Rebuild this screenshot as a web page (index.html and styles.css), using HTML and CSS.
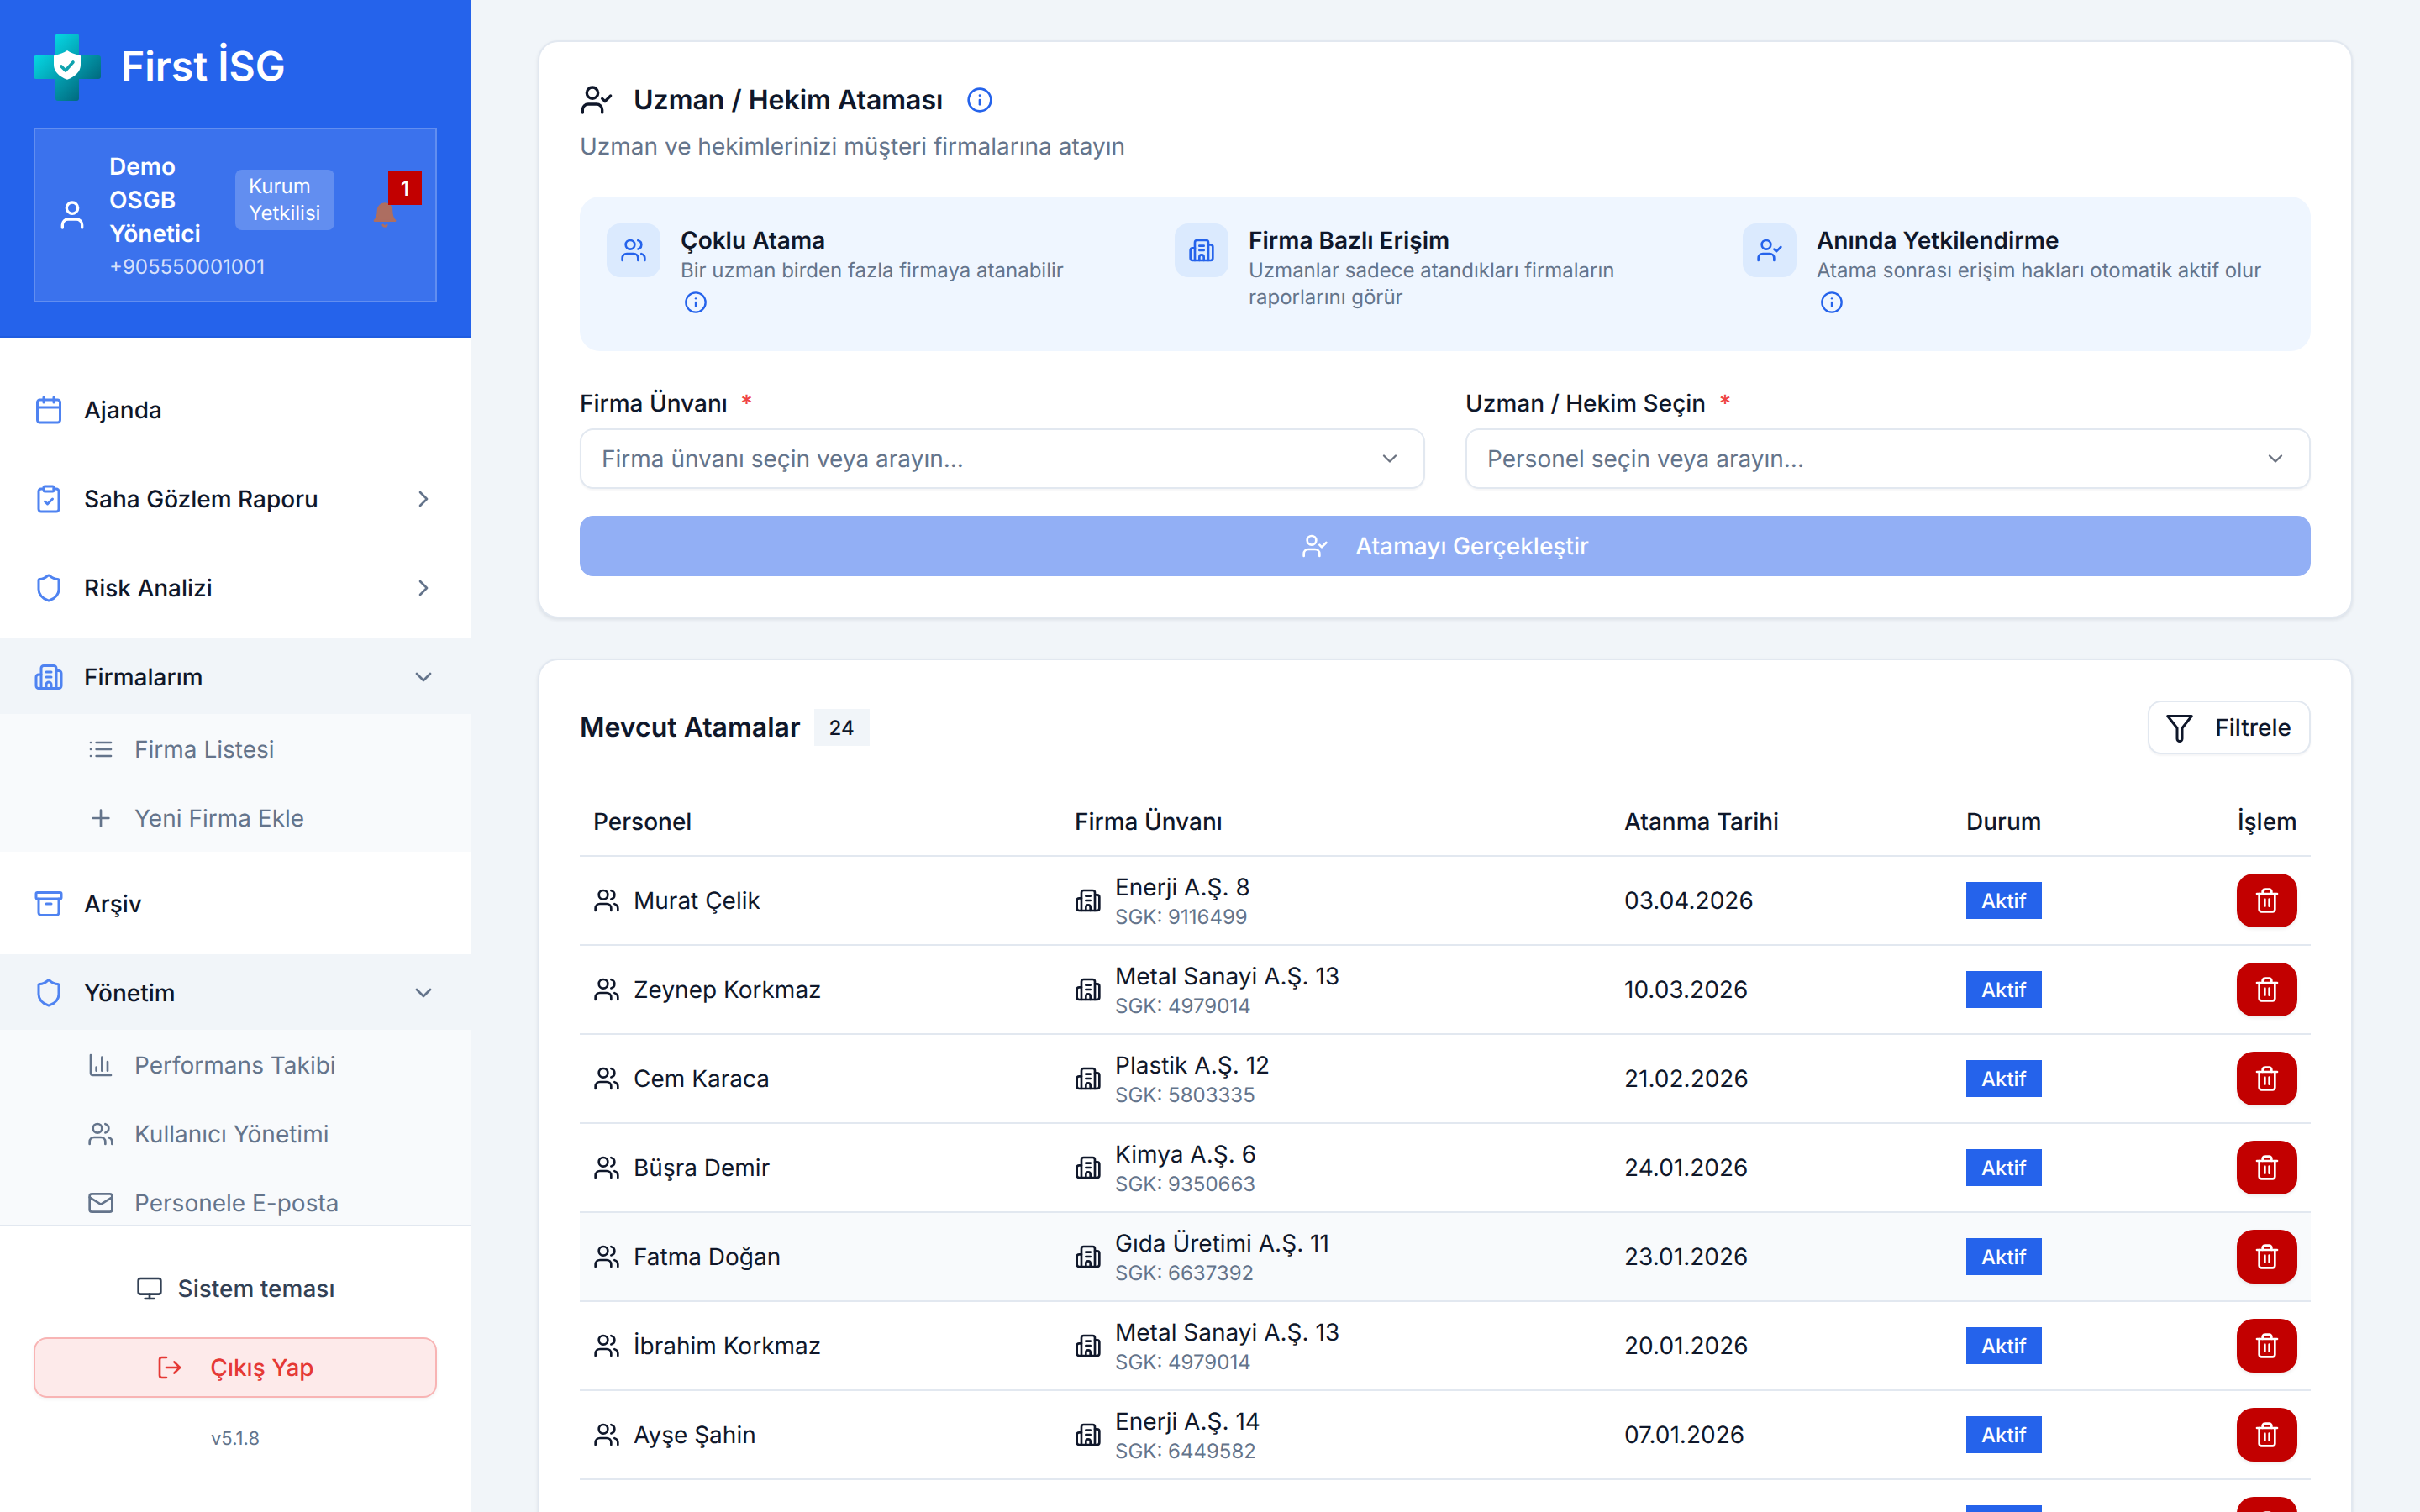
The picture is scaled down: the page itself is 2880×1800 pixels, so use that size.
FILE: index.html
```html
<!DOCTYPE html>
<html lang="tr">
<head>
<meta charset="utf-8">
<title>First İSG</title>
<link rel="stylesheet" href="styles.css">
</head>
<body>
<svg class="defs" aria-hidden="true">
  <symbol id="user" viewBox="0 0 24 24"><path d="M19 21v-2a4 4 0 0 0-4-4H9a4 4 0 0 0-4 4v2"/><circle cx="12" cy="7" r="4"/></symbol>
  <symbol id="users" viewBox="0 0 24 24"><path d="M16 21v-2a4 4 0 0 0-4-4H6a4 4 0 0 0-4 4v2"/><circle cx="9" cy="7" r="4"/><path d="M22 21v-2a4 4 0 0 0-3-3.87"/><path d="M16 3.13a4 4 0 0 1 0 7.75"/></symbol>
  <symbol id="usercheck" viewBox="0 0 24 24"><path d="M16 21v-2a4 4 0 0 0-4-4H6a4 4 0 0 0-4 4v2"/><circle cx="9" cy="7" r="4"/><polyline points="16 11 18 13 22 9"/></symbol>
  <symbol id="calendar" viewBox="0 0 24 24"><path d="M8 2v4"/><path d="M16 2v4"/><rect x="3" y="4" width="18" height="18" rx="2"/><path d="M3 10h18"/></symbol>
  <symbol id="clipboard" viewBox="0 0 24 24"><rect x="8" y="2" width="8" height="4" rx="1"/><path d="M16 4h2a2 2 0 0 1 2 2v14a2 2 0 0 1-2 2H6a2 2 0 0 1-2-2V6a2 2 0 0 1 2-2h2"/><path d="m9 14 2 2 4-4"/></symbol>
  <symbol id="shield" viewBox="0 0 24 24"><path d="M20 13c0 5-3.5 7.5-7.66 8.95a1 1 0 0 1-.67-.01C7.5 20.5 4 18 4 13V6a1 1 0 0 1 1-1c2 0 4.5-1.2 6.24-2.72a1.17 1.17 0 0 1 1.52 0C14.51 3.81 17 5 19 5a1 1 0 0 1 1 1z"/></symbol>
  <symbol id="building" viewBox="0 0 24 24"><path d="M10 12h4"/><path d="M10 8h4"/><path d="M14 21v-3a2 2 0 0 0-4 0v3"/><path d="M6 10H4a2 2 0 0 0-2 2v7a2 2 0 0 0 2 2h16a2 2 0 0 0 2-2V9a2 2 0 0 0-2-2h-2"/><path d="M6 21V5a2 2 0 0 1 2-2h8a2 2 0 0 1 2 2v16"/></symbol>
  <symbol id="right" viewBox="0 0 24 24"><path d="m9 18 6-6-6-6"/></symbol>
  <symbol id="down" viewBox="0 0 24 24"><path d="m6 9 6 6 6-6"/></symbol>
  <symbol id="list" viewBox="0 0 24 24"><path d="M3 12h.01"/><path d="M3 18h.01"/><path d="M3 6h.01"/><path d="M8 12h13"/><path d="M8 18h13"/><path d="M8 6h13"/></symbol>
  <symbol id="plus" viewBox="0 0 24 24"><path d="M5 12h14"/><path d="M12 5v14"/></symbol>
  <symbol id="archive" viewBox="0 0 24 24"><rect x="2" y="3" width="20" height="5" rx="1"/><path d="M4 8v11a2 2 0 0 0 2 2h12a2 2 0 0 0 2-2V8"/><path d="M10 12h4"/></symbol>
  <symbol id="chart" viewBox="0 0 24 24"><path d="M3 3v16a2 2 0 0 0 2 2h16"/><path d="M18 17V9"/><path d="M13 17V5"/><path d="M8 17v-3"/></symbol>
  <symbol id="mail" viewBox="0 0 24 24"><rect x="2" y="4" width="20" height="16" rx="2"/><path d="m22 7-8.97 5.7a1.94 1.94 0 0 1-2.06 0L2 7"/></symbol>
  <symbol id="monitor" viewBox="0 0 24 24"><rect x="2" y="3" width="20" height="14" rx="2"/><path d="M8 21h8"/><path d="M12 17v4"/></symbol>
  <symbol id="logout" viewBox="0 0 24 24"><path d="M9 21H5a2 2 0 0 1-2-2V5a2 2 0 0 1 2-2h4"/><polyline points="16 17 21 12 16 7"/><path d="M21 12H9"/></symbol>
  <symbol id="info" viewBox="0 0 24 24"><circle cx="12" cy="12" r="10"/><path d="M12 16v-4"/><path d="M12 8h.01"/></symbol>
  <symbol id="trash" viewBox="0 0 24 24"><path d="M3 6h18"/><path d="M19 6v14c0 1-1 2-2 2H7c-1 0-2-1-2-2V6"/><path d="M8 6V4c0-1 1-2 2-2h4c1 0 2 1 2 2v2"/><path d="M10 11v6"/><path d="M14 11v6"/></symbol>
  <symbol id="funnel" viewBox="0 0 24 24"><path d="M2.5 3h19L14 12.5V21a2 2 0 0 1-4 0v-8.500z"/></symbol>
  <symbol id="bell" viewBox="0 0 24 24"><path d="M6 8a6 6 0 0 1 12 0c0 7 3 9 3 9H3s3-2 3-9"/><path class="clapper" d="M10.300 21a1.940 1.940 0 0 0 3.400 0"/></symbol>
</svg>

<div class="app">
  <aside class="sidebar">
    <header class="side-head">
      <div class="brand">
        <svg class="logo" viewBox="0 0 80 80">
          <defs><linearGradient id="lg" gradientUnits="userSpaceOnUse" x1="8" y1="8" x2="72" y2="72"><stop offset="0" stop-color="#06e2ee"/><stop offset="1" stop-color="#005f75"/></linearGradient></defs>
          <path fill="url(#lg)" d="M29 0h22a3 3 0 0 1 3 3v23h23a3 3 0 0 1 3 3v22a3 3 0 0 1-3 3H54v23a3 3 0 0 1-3 3H29a3 3 0 0 1-3-3V54H3a3 3 0 0 1-3-3V29a3 3 0 0 1 3-3h23V3a3 3 0 0 1 3-3z"/>
          <path fill="#fff" d="M40 24.500c4 3 9 4.800 14.500 5.500 1 0 1.500.6 1.500 1.500v10c0 8.500-7 14.500-16 17.800-9-3.300-16-9.300-16-17.800v-10c0-.9.5-1.500 1.500-1.500 5.500-.7 10.500-2.500 14.500-5.500z" transform="translate(0 -4.500)"/>
          <path fill="none" stroke="#0fa3ae" stroke-width="3.600" stroke-linecap="round" stroke-linejoin="round" d="M33 39l5 5 9-10"/>
        </svg>
        <span class="brand-name">First İSG</span>
      </div>
      <div class="user-box">
        <svg class="i s40"><use href="#user"/></svg>
        <div class="user-text">
          <div class="user-top">
            <div class="user-name">Demo OSGB Yönetici</div>
            <div class="user-role">Kurum Yetkilisi</div>
          </div>
          <div class="user-phone">+905550001001</div>
        </div>
        <div class="bell-wrap">
          <svg class="i s32 bell"><use href="#bell"/></svg>
          <span class="bell-count">1</span>
        </div>
      </div>
    </header>

    <nav class="nav">
      <a class="nav-row"><svg class="i s36 nav-ic"><use href="#calendar"/></svg><span>Ajanda</span></a>
      <a class="nav-row"><svg class="i s36 nav-ic"><use href="#clipboard"/></svg><span>Saha Gözlem Raporu</span><svg class="i s32 chev"><use href="#right"/></svg></a>
      <a class="nav-row"><svg class="i s36 nav-ic"><use href="#shield"/></svg><span>Risk Analizi</span><svg class="i s32 chev"><use href="#right"/></svg></a>
      <div class="nav-group">
        <a class="nav-row open"><svg class="i s36 nav-ic"><use href="#building"/></svg><span>Firmalarım</span><svg class="i s32 chev"><use href="#down"/></svg></a>
        <div class="sub">
          <a class="sub-row"><svg class="i s32"><use href="#list"/></svg><span>Firma Listesi</span></a>
          <a class="sub-row"><svg class="i s32"><use href="#plus"/></svg><span>Yeni Firma Ekle</span></a>
        </div>
      </div>
      <a class="nav-row"><svg class="i s36 nav-ic"><use href="#archive"/></svg><span>Arşiv</span></a>
      <div class="nav-group">
        <a class="nav-row open"><svg class="i s36 nav-ic"><use href="#shield"/></svg><span>Yönetim</span><svg class="i s32 chev"><use href="#down"/></svg></a>
        <div class="sub">
          <a class="sub-row"><svg class="i s32"><use href="#chart"/></svg><span>Performans Takibi</span></a>
          <a class="sub-row"><svg class="i s32"><use href="#users"/></svg><span>Kullanıcı Yönetimi</span></a>
          <a class="sub-row"><svg class="i s32"><use href="#mail"/></svg><span>Personele E-posta</span></a>
        </div>
      </div>
    </nav>

    <footer class="side-foot">
      <div class="theme"><svg class="i s32"><use href="#monitor"/></svg><span>Sistem teması</span></div>
      <button class="logout"><svg class="i s32"><use href="#logout"/></svg><span>Çıkış Yap</span></button>
      <div class="version">v5.1.8</div>
    </footer>
  </aside>

  <main class="main">
    <section class="card">
      <div class="card-title">
        <svg class="i s40"><use href="#usercheck"/></svg>
        <h1>Uzman / Hekim Ataması</h1>
        <svg class="i s32 blue"><use href="#info"/></svg>
      </div>
      <p class="card-sub">Uzman ve hekimlerinizi müşteri firmalarına atayın</p>

      <div class="info-box">
        <div class="info-item">
          <div class="info-ic"><svg class="i s32"><use href="#users"/></svg></div>
          <div>
            <div class="info-title">Çoklu Atama</div>
            <div class="info-desc">Bir uzman birden fazla firmaya atanabilir</div>
            <div class="info-more"><svg class="i s28 blue"><use href="#info"/></svg></div>
          </div>
        </div>
        <div class="info-item">
          <div class="info-ic"><svg class="i s32"><use href="#building"/></svg></div>
          <div>
            <div class="info-title">Firma Bazlı Erişim</div>
            <div class="info-desc">Uzmanlar sadece atandıkları firmaların raporlarını görür</div>
          </div>
        </div>
        <div class="info-item">
          <div class="info-ic"><svg class="i s32"><use href="#usercheck"/></svg></div>
          <div>
            <div class="info-title">Anında Yetkilendirme</div>
            <div class="info-desc">Atama sonrası erişim hakları otomatik aktif olur</div>
            <div class="info-more"><svg class="i s28 blue"><use href="#info"/></svg></div>
          </div>
        </div>
      </div>

      <div class="form-grid">
        <div class="field">
          <label class="label">Firma Ünvanı <span class="req">*</span></label>
          <div class="select"><span>Firma ünvanı seçin veya arayın...</span><svg class="i s28 sel-chev"><use href="#down"/></svg></div>
        </div>
        <div class="field">
          <label class="label">Uzman / Hekim Seçin <span class="req">*</span></label>
          <div class="select"><span>Personel seçin veya arayın...</span><svg class="i s28 sel-chev"><use href="#down"/></svg></div>
        </div>
      </div>
      <button class="submit"><svg class="i s32"><use href="#usercheck"/></svg><span>Atamayı Gerçekleştir</span></button>
    </section>

    <section class="card">
      <div class="list-head">
        <h2>Mevcut Atamalar</h2>
        <span class="count">24</span>
        <button class="filter"><svg class="i s36"><use href="#funnel"/></svg><span>Filtrele</span></button>
      </div>
      <table class="tbl">
        <colgroup><col class="c1"><col class="c2"><col class="c3"><col class="c4"><col class="c5"></colgroup>
        <thead><tr><th>Personel</th><th>Firma Ünvanı</th><th>Atanma Tarihi</th><th>Durum</th><th class="end">İşlem</th></tr></thead>
        <tbody>
          <tr><td><div class="cell"><svg class="i s32"><use href="#users"/></svg>Murat Çelik</div></td><td><div class="cell"><svg class="i s32"><use href="#building"/></svg><div class="firm-text"><div class="firm">Enerji A.Ş. 8</div><div class="sgk">SGK: 9116499</div></div></div></td><td>03.04.2026</td><td><span class="tag">Aktif</span></td><td class="end"><button class="del"><svg class="i s32"><use href="#trash"/></svg></button></td></tr>
          <tr><td><div class="cell"><svg class="i s32"><use href="#users"/></svg>Zeynep Korkmaz</div></td><td><div class="cell"><svg class="i s32"><use href="#building"/></svg><div class="firm-text"><div class="firm">Metal Sanayi A.Ş. 13</div><div class="sgk">SGK: 4979014</div></div></div></td><td>10.03.2026</td><td><span class="tag">Aktif</span></td><td class="end"><button class="del"><svg class="i s32"><use href="#trash"/></svg></button></td></tr>
          <tr><td><div class="cell"><svg class="i s32"><use href="#users"/></svg>Cem Karaca</div></td><td><div class="cell"><svg class="i s32"><use href="#building"/></svg><div class="firm-text"><div class="firm">Plastik A.Ş. 12</div><div class="sgk">SGK: 5803335</div></div></div></td><td>21.02.2026</td><td><span class="tag">Aktif</span></td><td class="end"><button class="del"><svg class="i s32"><use href="#trash"/></svg></button></td></tr>
          <tr><td><div class="cell"><svg class="i s32"><use href="#users"/></svg>Büşra Demir</div></td><td><div class="cell"><svg class="i s32"><use href="#building"/></svg><div class="firm-text"><div class="firm">Kimya A.Ş. 6</div><div class="sgk">SGK: 9350663</div></div></div></td><td>24.01.2026</td><td><span class="tag">Aktif</span></td><td class="end"><button class="del"><svg class="i s32"><use href="#trash"/></svg></button></td></tr>
          <tr class="hover"><td><div class="cell"><svg class="i s32"><use href="#users"/></svg>Fatma Doğan</div></td><td><div class="cell"><svg class="i s32"><use href="#building"/></svg><div class="firm-text"><div class="firm">Gıda Üretimi A.Ş. 11</div><div class="sgk">SGK: 6637392</div></div></div></td><td>23.01.2026</td><td><span class="tag">Aktif</span></td><td class="end"><button class="del"><svg class="i s32"><use href="#trash"/></svg></button></td></tr>
          <tr><td><div class="cell"><svg class="i s32"><use href="#users"/></svg>İbrahim Korkmaz</div></td><td><div class="cell"><svg class="i s32"><use href="#building"/></svg><div class="firm-text"><div class="firm">Metal Sanayi A.Ş. 13</div><div class="sgk">SGK: 4979014</div></div></div></td><td>20.01.2026</td><td><span class="tag">Aktif</span></td><td class="end"><button class="del"><svg class="i s32"><use href="#trash"/></svg></button></td></tr>
          <tr><td><div class="cell"><svg class="i s32"><use href="#users"/></svg>Ayşe Şahin</div></td><td><div class="cell"><svg class="i s32"><use href="#building"/></svg><div class="firm-text"><div class="firm">Enerji A.Ş. 14</div><div class="sgk">SGK: 6449582</div></div></div></td><td>07.01.2026</td><td><span class="tag">Aktif</span></td><td class="end"><button class="del"><svg class="i s32"><use href="#trash"/></svg></button></td></tr>
          <tr><td></td><td><div class="cell"><svg class="i s32"><use href="#building"/></svg><div class="firm-text"><div class="firm">Enerji A.Ş. 10</div></div></div></td><td></td><td><span class="tag">Aktif</span></td><td class="end"><button class="del"><svg class="i s32"><use href="#trash"/></svg></button></td></tr>
        </tbody>
      </table>
    </section>
  </main>
</div>
</body>
</html>
```

FILE: styles.css
```css
* { box-sizing: border-box; }
html, body { margin: 0; height: 100%; overflow: hidden; }
body { font-family: Inter, "Noto Sans", sans-serif; font-size: 28px; color: #0f172a; background: #f1f5f9; text-rendering: geometricPrecision; }
.defs { display: none; }
button { font-family: inherit; cursor: pointer; text-rendering: geometricPrecision; }

.i { fill: none; stroke: currentColor; stroke-width: 2; stroke-linecap: round; stroke-linejoin: round; flex-shrink: 0; display: block; }
.s28 { width: 28px; height: 28px; }
.s32 { width: 32px; height: 32px; }
.s36 { width: 36px; height: 36px; }
.s40 { width: 40px; height: 40px; }
.blue { color: #2563eb; }

.app { display: flex; height: 1800px; overflow: hidden; }

/* Sidebar */
.sidebar { width: 560px; flex-shrink: 0; background: #fff; display: flex; flex-direction: column; height: 100%; }
.side-head { height: 402px; flex-shrink: 0; background: #2563eb; border-bottom: 2px solid #1f5ce0; padding: 40px 40px 0; color: #fff; }
.brand { display: flex; align-items: center; gap: 24px; height: 80px; }
.logo { width: 80px; height: 80px; display: block; }
.brand-name { font-size: 48px; font-weight: 600; line-height: 60px; padding-bottom: 2px; }
.user-box { margin-top: 32px; height: 208px; border: 2px solid rgba(255,255,255,.2); background: rgba(255,255,255,.1); padding: 24px; display: flex; align-items: center; gap: 24px; }
.user-text { width: 268px; flex-shrink: 0; }
.user-top { display: flex; align-items: center; gap: 16px; }
.user-name { width: 134px; flex-shrink: 0; font-weight: 600; line-height: 40px; }
.user-role { width: 118px; flex-shrink: 0; padding: 4px 16px; border-radius: 8px; background: rgba(255,255,255,.2); font-size: 24px; line-height: 32px; }
.user-phone { font-size: 24px; line-height: 36px; padding-top: 2px; margin-bottom: -2px; color: rgba(255,255,255,.8); white-space: nowrap; }
.bell-wrap { position: relative; margin-left: 20px; }
.bell { color: #ad6e61; fill: #ad6e61; }
.bell-count { position: absolute; top: -36px; right: -28px; width: 40px; height: 40px; background: #c20000; color: #fff; font-size: 24px; font-weight: 500; display: flex; align-items: center; justify-content: center; }

.nav { flex: 1; min-height: 0; overflow: hidden; padding-top: 40px; }
.nav-row { height: 90px; padding: 2px 40px 0; margin-bottom: 16px; display: flex; align-items: center; gap: 24px; font-weight: 500; color: #0f172a; }
.nav-ic { color: #4f83f1; }
.nav-row .chev { margin-left: auto; color: #64748b; }
.nav-group { margin-bottom: 16px; }
.nav-group .nav-row { margin-bottom: 0; }
.nav-row.open { background: #f1f5f9; }
.sub { background: #f8fafc; }
.sub-row { height: 82px; padding: 2px 0 0 104px; display: flex; align-items: center; gap: 24px; color: #64748b; }

.side-foot { height: 342px; flex-shrink: 0; border-top: 2px solid #e2e8f0; padding: 42px 40px 0; }
.theme { height: 64px; display: flex; align-items: center; justify-content: center; gap: 18px; font-weight: 500; color: #334155; }
.logout { margin-top: 26px; width: 100%; height: 72px; border: 2px solid #f8b4b4; border-radius: 16px; background: #fdeaea; color: #e53935; font-size: 28px; font-weight: 500; display: flex; align-items: center; justify-content: center; gap: 32px; box-shadow: 0 2px 4px rgba(0,0,0,.05); }
.version { margin-top: 33px; text-align: center; font-size: 22px; line-height: 32px; color: #64748b; }

/* Main */
.main { flex: 1; min-width: 0; padding: 48px 80px; height: 100%; overflow: hidden; display: flex; flex-direction: column; gap: 48px; }
.card { background: #fff; border: 2px solid #e2e8f0; border-radius: 24px; padding: 48px; box-shadow: 0 2px 4px rgba(15,23,42,.09); flex-shrink: 0; }
.card-title { display: flex; align-items: center; gap: 24px; height: 42px; }
.card-title h1 { margin: 0 4px 0 0; font-size: 32px; font-weight: 600; line-height: 42px; }
.card-sub { margin: 14px 0 40px; line-height: 40px; color: #64748b; }

.info-box { background: #eff6ff; border-radius: 24px; padding: 32px; display: grid; grid-template-columns: repeat(3, 1fr); gap: 32px; }
.info-item { display: flex; gap: 24px; }
.info-ic { width: 64px; height: 64px; flex-shrink: 0; border-radius: 16px; background: #dbeafe; color: #2563eb; display: flex; align-items: center; justify-content: center; }
.info-title { font-weight: 600; line-height: 40px; }
.info-desc { font-size: 24px; line-height: 32px; color: #64748b; }
.info-more { height: 48px; padding: 8px 0 0 4px; }

.form-grid { margin-top: 40px; display: grid; grid-template-columns: 1fr 1fr; gap: 48px; }
.label { display: block; font-weight: 500; line-height: 44px; height: 44px; }
.req { color: #ef4444; margin-left: 8px; }
.select { margin-top: 8px; height: 72px; border: 2px solid #e2e8f0; border-radius: 16px; padding: 0 26px 0 24px; display: flex; align-items: center; justify-content: space-between; color: #64748b; background: #fff; box-shadow: 0 2px 2px rgba(15,23,42,.04); }
.sel-chev { color: #6b7280; }
.submit { margin-top: 32px; width: 100%; height: 72px; border: 0; border-radius: 16px; background: #92aff5; color: #fff; font-size: 28px; font-weight: 500; display: flex; align-items: center; justify-content: center; gap: 32px; }

.list-head { display: flex; align-items: center; height: 64px; }
.list-head h2 { margin: 0; font-size: 32px; font-weight: 600; line-height: 42px; }
.count { margin-left: 16px; height: 44px; padding: 0 18px; display: flex; align-items: center; background: #f1f5f9; font-size: 24px; font-weight: 500; }
.filter { margin-left: auto; height: 64px; padding: 0 21px 0 18px; border: 2px solid #e2e8f0; border-radius: 16px; background: #fff; color: #0f172a; font-size: 28px; font-weight: 500; display: flex; align-items: center; gap: 24px; box-shadow: 0 2px 2px rgba(15,23,42,.04); }

.tbl { margin-top: 40px; width: 100%; table-layout: fixed; border-collapse: separate; border-spacing: 0; }
.c1 { width: 573px; } .c2 { width: 654px; } .c3 { width: 407px; } .c4 { width: 300px; } .c5 { width: 126px; }
.tbl th { height: 82px; padding: 0 16px; border-bottom: 2px solid #e2e8f0; text-align: left; font-weight: 500; }
.tbl td { height: 106px; padding: 0 16px; border-bottom: 2px solid #e2e8f0; }
.tbl .end { text-align: right; }
.hover td { background: #f8fafc; }
.cell { display: flex; align-items: center; gap: 16px; }
.firm-text { padding-top: 4px; }
.firm { line-height: 36px; }
.sgk { font-size: 24px; line-height: 36px; color: #64748b; }
.tag { display: inline-flex; align-items: center; height: 44px; padding: 0 18px; background: #2563eb; color: #fff; font-size: 24px; font-weight: 500; vertical-align: middle; }
.del { display: inline-flex; width: 72px; height: 64px; border: 0; border-radius: 20px; background: #c20000; color: #fff; align-items: center; justify-content: center; vertical-align: middle; box-shadow: 0 2px 4px rgba(0,0,0,.08); }
```
